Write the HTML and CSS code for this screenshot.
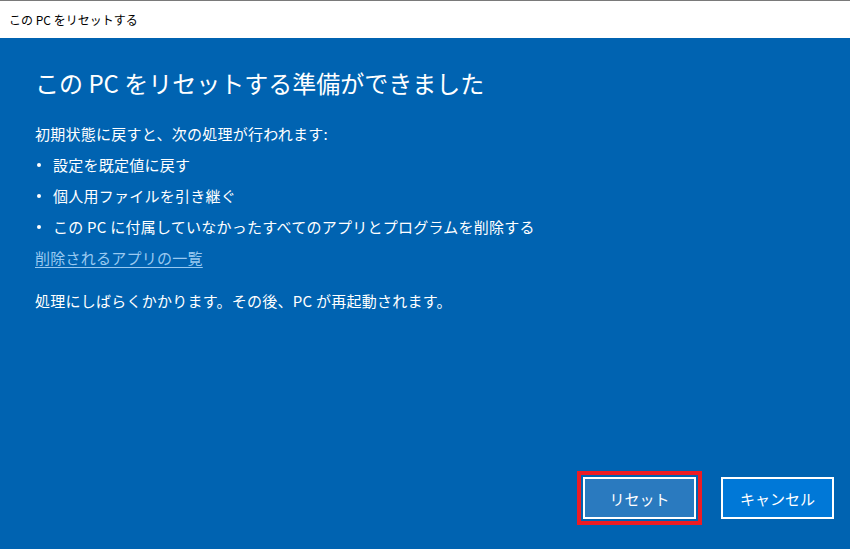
FILE: index.html
```html
<!DOCTYPE html>
<html lang="ja">
<head>
    <meta charset="UTF-8">
    <meta name="viewport" content="width=device-width, initial-scale=1.0">
    <title>この PC をリセットする</title>
    <link rel="stylesheet" href="styles.css">
</head>
<body>

    <div class="titlebar">この PC をリセットする</div>

    <div class="main">
        <h1>この PC をリセットする準備ができました</h1>
        <p class="lead">初期状態に戻すと、次の処理が行われます:</p>
        <ul class="items">
            <li>設定を既定値に戻す</li>
            <li>個人用ファイルを引き継ぐ</li>
            <li>この PC に付属していなかったすべてのアプリとプログラムを削除する</li>
        </ul>
        <a href="#" class="applist">削除されるアプリの一覧</a>
        <p class="note">処理にしばらくかかります。その後、PC が再起動されます。</p>

        <div class="buttons">
            <button class="btn btn-reset">リセット</button>
            <button class="btn btn-cancel">キャンセル</button>
        </div>
    </div>

</body>
</html>
```

FILE: styles.css
```css
html, body {
    height: 100%;
}
body {
    margin: 0;
    font-family: 'Noto Sans CJK JP', 'Noto Sans', sans-serif;
    background-color: #ffffff;
    display: flex;
    flex-direction: column;
}
.titlebar {
    height: 37px;
    border-top: 1px solid #7a7a7a;
    padding-left: 9px;
    font-size: 12px;
    line-height: 37px;
    color: #000000;
}
.main {
    flex: 1;
    background-color: #0063b1;
    color: #ffffff;
    padding: 30px 16px 30px 35px;
    display: flex;
    flex-direction: column;
    align-items: flex-start;
}
h1 {
    margin: 0 0 20px 0;
    font-size: 24px;
    line-height: 30px;
    font-weight: normal;
}
.lead,
.note,
.items,
.applist {
    font-size: 15px;
    line-height: 31px;
    letter-spacing: 0.25px;
}
.lead,
.note {
    margin: 0;
}
.items {
    margin: 0;
    padding: 0;
    list-style: none;
}
.items li {
    position: relative;
    padding-left: 18px;
}
/* 箇条書きの点 */
.items li::before {
    content: "";
    position: absolute;
    left: 2px;
    top: 14px;
    width: 4px;
    height: 4px;
    border-radius: 50%;
    background-color: #ffffff;
}
.applist {
    color: #99c9f0;
    text-decoration: underline;
    text-underline-offset: 3px;
}
.note {
    margin-top: 12px;
}

/* 下のボタン */
.buttons {
    margin-top: auto;
    align-self: flex-end;
    display: flex;
    gap: 25px;
}
.btn {
    width: 113px;
    height: 42px;
    border: 2px solid #ffffff;
    color: #ffffff;
    font-family: inherit;
    font-size: 15px;
    padding: 0;
    cursor: pointer;
}
.btn-reset {
    background-color: #2a7abf;
    outline: 4px solid #ed1c24;
    outline-offset: 2px;
}
.btn-cancel {
    background-color: #0078d7;
}
```
